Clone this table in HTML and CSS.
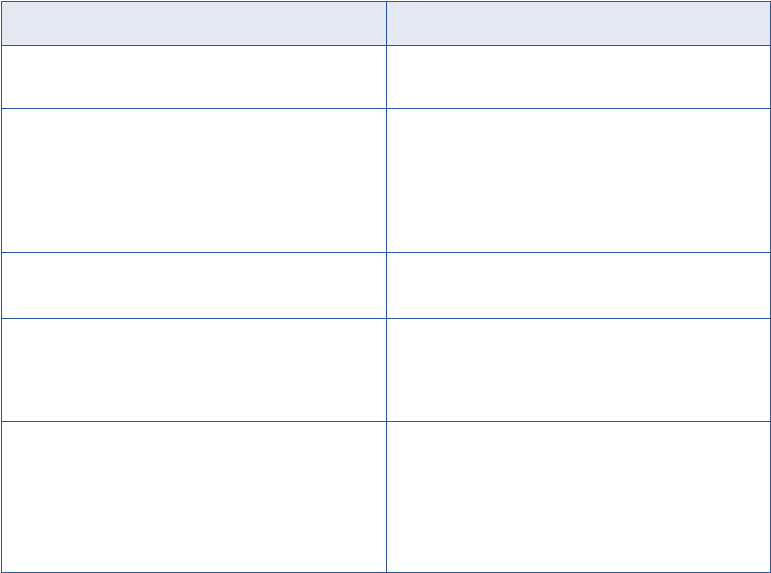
FILE: index.html
```html
<!DOCTYPE html>
<html>
<head>
<meta charset="utf-8">
<link rel="stylesheet" href="styles.css">
</head>
<body>
<div class="table">
  <div class="cell head"></div><div class="cell head"></div>
  <div class="cell"></div><div class="cell"></div>
  <div class="cell"></div><div class="cell"></div>
  <div class="cell"></div><div class="cell"></div>
  <div class="cell"></div><div class="cell"></div>
  <div class="cell"></div><div class="cell"></div>
</div>
</body>
</html>
```
FILE: styles.css
```css
html, body { margin: 0; padding: 0; background: #ffffff; }
body { padding: 1px 0 0 1px; font-family: "Liberation Sans", Arial, sans-serif; }
.table {
  display: grid;
  grid-template-columns: 385px 384px;
  grid-template-rows: 44px 63px 144px 66px 103px 151px;
  border-top: 1px solid #2a55a6;
  border-left: 1px solid #2a55a6;
  width: max-content;
}
.cell {
  border-right: 1px solid #2a55a6;
  border-bottom: 1px solid #2a55a6;
  background: #ffffff;
}
.cell.head { background: #e4e9f4; }
```
